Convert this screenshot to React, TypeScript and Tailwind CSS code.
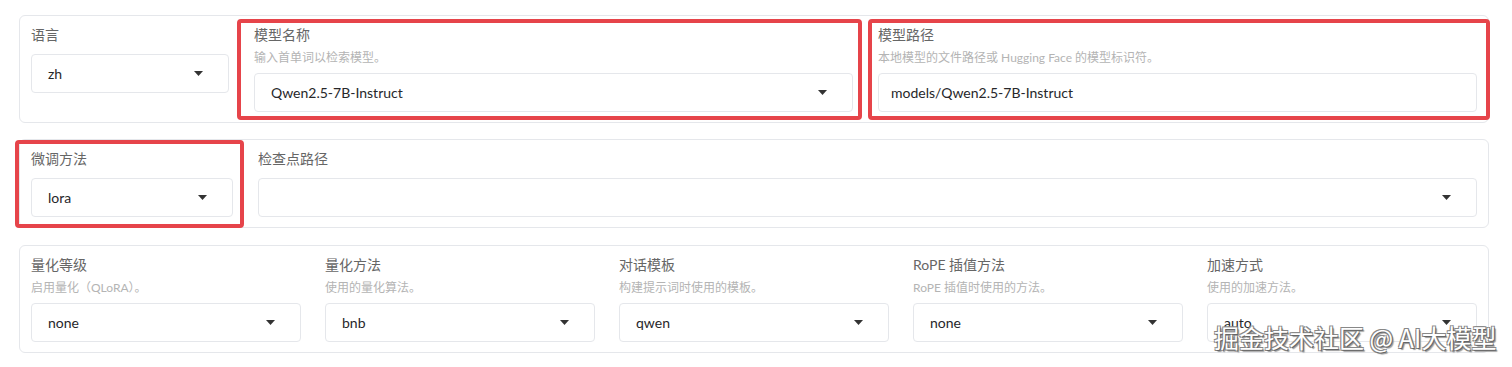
import React from "react";

const Caret = () => (
  <svg width="9" height="5" viewBox="0 0 9 5" className="shrink-0">
    <path d="M0 0h9L4.5 5z" fill="#333" />
  </svg>
);

const Select = ({ value }: { value: string }) => (
  <div className="flex h-[39px] items-center justify-between rounded-[4px] border border-[#e5e7eb] bg-white pl-4 pr-[25px] text-[14px] text-[#27272a]">
    <span>{value}</span>
    <Caret />
  </div>
);

const Input = ({ value }: { value: string }) => (
  <div className="flex h-[39px] items-center rounded-[4px] border border-[#e5e7eb] bg-white pl-3 text-[14px] text-[#27272a]">
    <span>{value}</span>
  </div>
);

const Field = ({
  label,
  hint,
  children,
}: {
  label: string;
  hint?: string;
  children: React.ReactNode;
}) => (
  <div className="flex min-w-0 flex-col">
    <div className="h-5 text-[14px] leading-5 text-[#666]">{label}</div>
    {hint ? (
      <>
        <div className="mt-[5px] h-4 whitespace-nowrap text-[12px] leading-4 text-[#b4b4b4]">{hint}</div>
        <div className="mt-[7px]">{children}</div>
      </>
    ) : (
      <div className="mt-[9px]">{children}</div>
    )}
  </div>
);

const Box = ({ className, children }: { className?: string; children: React.ReactNode }) => (
  <div className={"ml-[19px] w-[1470px] rounded-[6px] border border-[#e5e7eb] bg-white px-[11px] pb-[10px] pt-[9px] " + (className ?? "")}>
    {children}
  </div>
);

export default function App() {
  return (
    <div className="relative h-[367px] w-[1512px] overflow-hidden bg-white pt-[15px] font-['Lato','Noto_Sans_CJK_SC',sans-serif]">
      <Box>
        <div className="flex gap-[25px]">
          <div className="w-[198px] shrink-0">
            <Field label="语言">
              <Select value="zh" />
            </Field>
          </div>
          <div className="min-w-0 flex-1">
            <Field label="模型名称" hint="输入首单词以检索模型。">
              <Select value="Qwen2.5-7B-Instruct" />
            </Field>
          </div>
          <div className="min-w-0 flex-1">
            <Field label="模型路径" hint="本地模型的文件路径或 Hugging Face 的模型标识符。">
              <Input value="models/Qwen2.5-7B-Instruct" />
            </Field>
          </div>
        </div>
      </Box>

      <Box className="mt-4">
        <div className="flex gap-[25px]">
          <div className="w-[202px] shrink-0">
            <Field label="微调方法">
              <Select value="lora" />
            </Field>
          </div>
          <div className="min-w-0 flex-1">
            <Field label="检查点路径">
              <Select value="" />
            </Field>
          </div>
        </div>
      </Box>

      <Box className="mt-[17px]">
        <div className="grid grid-cols-5 gap-6">
          <Field label="量化等级" hint="启用量化（QLoRA）。">
            <Select value="none" />
          </Field>
          <Field label="量化方法" hint="使用的量化算法。">
            <Select value="bnb" />
          </Field>
          <Field label="对话模板" hint="构建提示词时使用的模板。">
            <Select value="qwen" />
          </Field>
          <Field label="RoPE 插值方法" hint="RoPE 插值时使用的方法。">
            <Select value="none" />
          </Field>
          <Field label="加速方式" hint="使用的加速方法。">
            <Select value="auto" />
          </Field>
        </div>
      </Box>

      {/* annotation boxes */}
      <div className="pointer-events-none absolute left-[237px] top-[19px] h-[101px] w-[625px] rounded-[4px] border-4 border-[#e6444a]" />
      <div className="pointer-events-none absolute left-[868px] top-[19px] h-[101px] w-[622px] rounded-[4px] border-4 border-[#e6444a]" />
      <div className="pointer-events-none absolute left-[15px] top-[140px] h-[88px] w-[229px] rounded-[4px] border-4 border-[#e6444a]" />

      {/* watermark */}
      <div className="pointer-events-none absolute left-[1214px] top-[325px] whitespace-nowrap font-['Noto_Sans_CJK_SC',sans-serif] text-[25px] leading-none text-white [text-shadow:1px_1px_0_#666,-1px_-1px_0_#888,1px_-1px_0_#888,-1px_1px_0_#888,2px_2px_1px_#999]">
        掘金技术社区 @ AI大模型
      </div>
    </div>
  );
}
